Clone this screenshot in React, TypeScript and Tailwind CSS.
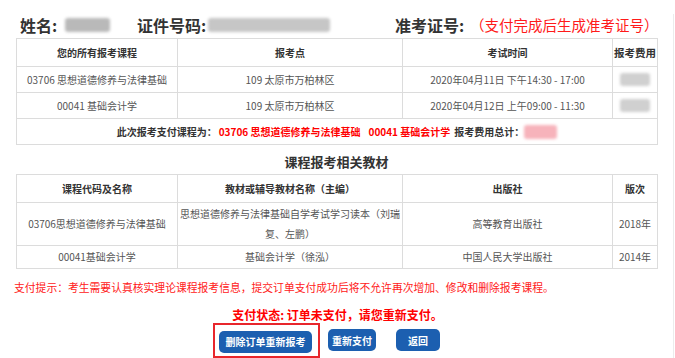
import React from 'react';

const font = { fontFamily: '"Noto Sans CJK SC", "Noto Sans", sans-serif' };

function Blur({ className }: { className: string }) {
  return <div className={`rounded-[3px] blur-[1.5px] ${className}`} />;
}

const courses = [
  { name: '03706 思想道德修养与法律基础', place: '109 太原市万柏林区', time: '2020年04月11日 下午14:30 - 17:00' },
  { name: '00041 基础会计学', place: '109 太原市万柏林区', time: '2020年04月12日 上午09:00 - 11:30' },
];

const books = [
  { code: '03706思想道德修养与法律基础', book: '思想道德修养与法律基础自学考试学习读本（刘瑞复、左鹏）', press: '高等教育出版社', ed: '2018年', h: 'h-[43px]' },
  { code: '00041基础会计学', book: '基础会计学（徐泓）', press: '中国人民大学出版社', ed: '2014年', h: 'h-[23px]' },
];

export default function App() {
  const cell = 'border border-[#dcdcdc] text-center align-middle p-0 leading-[16px]';
  return (
    <div className="w-[675px] h-[358px] overflow-hidden bg-white" style={font}>
      <div className="w-[674px] h-[356px] border-r border-b border-[#ececec]">
        {/* top info line */}
        <div className="flex items-center h-[22px] mt-[14px] pl-[20px] text-[16px] font-bold text-[#333]">
          <span className="w-[45px]">姓名:</span>
          <Blur className="w-[45px] h-[14px] bg-[#b9b9b9]" />
          <span className="ml-[27px] w-[71px]">证件号码:</span>
          <Blur className="w-[122px] h-[14px] bg-[#c6c6c6]" />
          <span className="ml-[65px] w-[75px]">准考证号:</span>
          <span className="text-[14.5px] font-normal text-[#ff1a1a]">（支付完成后生成准考证号）</span>
        </div>

        {/* registered courses */}
        <table className="mt-[2px] ml-[16px] w-[641px] table-fixed border-collapse text-[10px] text-[#555]">
          <colgroup>
            <col className="w-[161px]" />
            <col className="w-[225px]" />
            <col className="w-[210px]" />
            <col className="w-[45px]" />
          </colgroup>
          <thead>
            <tr className="h-[28px] font-bold text-[#333]">
              <td className={cell}>您的所有报考课程</td>
              <td className={cell}>报考点</td>
              <td className={cell}>考试时间</td>
              <td className={`${cell} whitespace-nowrap text-[10.5px]`}>报考费用</td>
            </tr>
          </thead>
          <tbody>
            {courses.map((c) => (
              <tr key={c.name} className="h-[26px]">
                <td className={cell}>{c.name}</td>
                <td className={cell}>{c.place}</td>
                <td className={cell}>{c.time}</td>
                <td className={cell}>
                  <div className="flex justify-center">
                    <Blur className="w-[30px] h-[13px] bg-[#d0d0d0]" />
                  </div>
                </td>
              </tr>
            ))}
            <tr className="h-[26px]">
              <td colSpan={4} className={cell}>
                <div className="flex items-center justify-center font-bold">
                  <span className="text-[#333]">此次报考支付课程为：</span>
                  <span className="ml-[2px] text-[#ff0000]">03706 思想道德修养与法律基础</span>
                  <span className="ml-[8px] text-[#ff0000]">00041 基础会计学</span>
                  <span className="ml-[4px] text-[#333]">报考费用总计：</span>
                  <Blur className="w-[33px] h-[14px] bg-[#f7b3bb]" />
                </div>
              </td>
            </tr>
          </tbody>
        </table>

        <div className="h-[29px] flex items-center justify-center pt-[4px] text-[13px] font-bold text-[#333]">
          课程报考相关教材
        </div>

        {/* textbooks */}
        <table className="ml-[16px] w-[641px] table-fixed border-collapse text-[10px] text-[#555]">
          <colgroup>
            <col className="w-[161px]" />
            <col className="w-[225px]" />
            <col className="w-[210px]" />
            <col className="w-[45px]" />
          </colgroup>
          <thead>
            <tr className="h-[28px] font-bold text-[#333]">
              <td className={cell}>课程代码及名称</td>
              <td className={cell}>教材或辅导教材名称（主编）</td>
              <td className={cell}>出版社</td>
              <td className={cell}>版次</td>
            </tr>
          </thead>
          <tbody>
            {books.map((b) => (
              <tr key={b.code} className={b.h}>
                <td className={cell}>{b.code}</td>
                <td className={`${cell} leading-[20px]`}>{b.book}</td>
                <td className={cell}>{b.press}</td>
                <td className={cell}>{b.ed}</td>
              </tr>
            ))}
          </tbody>
        </table>

        <p className="mt-[11px] pl-[14px] text-[10.8px] leading-[14px] text-[#ff2020]">
          支付提示：考生需要认真核实理论课程报考信息，提交订单支付成功后将不允许再次增加、修改和删除报考课程。
        </p>

        <p className="mt-[14px] text-center text-[12px] leading-[14px] font-bold text-[#ff0000] pl-[2px]">
          支付状态: 订单未支付，请您重新支付。
        </p>

        <div className="flex items-center mt-[1px] pl-[213px]">
          <div className="border-2 border-[#e8262c] pl-[4px] pr-[6px] pt-[2px] pb-[3px]">
            <button type="button" className="w-[93px] h-[22px] rounded-[5px] bg-[#1c5fb0] text-[10px] font-bold text-white">
              删除订单重新报考
            </button>
          </div>
          <button type="button" className="ml-[8px] w-[48px] h-[22px] rounded-[5px] bg-[#1c5fb0] text-[10px] font-bold text-white">
            重新支付
          </button>
          <button type="button" className="ml-[20px] w-[44px] h-[22px] rounded-[5px] bg-[#1c5fb0] text-[10px] font-bold text-white">
            返回
          </button>
        </div>
      </div>
    </div>
  );
}
